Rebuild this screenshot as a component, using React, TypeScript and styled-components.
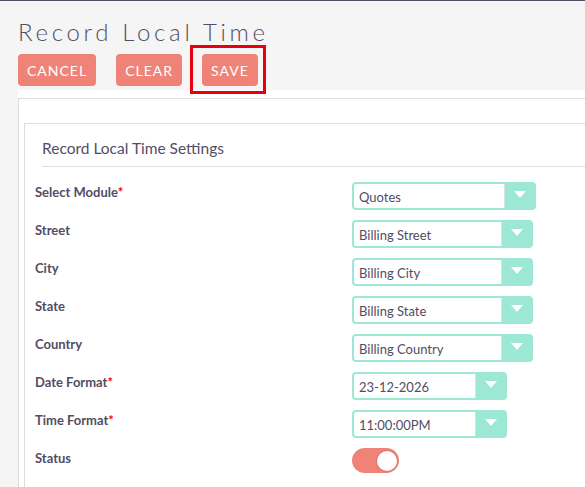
import React from 'react';
import styled, { createGlobalStyle } from 'styled-components';

const GlobalStyle = createGlobalStyle`
  html, body {
    margin: 0;
    padding: 0;
    overflow: hidden;
  }
  body {
    background: #f5f5f5;
    font-family: Lato, "Open Sans", Arial, sans-serif;
    color: #534d64;
  }
`;

const Page = styled.div`
  min-width: 680px;
  min-height: 487px;
  border-top: 1px solid #534d64;
  padding-left: 18px;
`;

const Title = styled.h2`
  margin: 16px 0 0;
  font-size: 24px;
  font-weight: 300;
  letter-spacing: 3.7px;
  line-height: normal;
  color: #534d64;
`;

const Toolbar = styled.div`
  display: flex;
  gap: 20px;
  margin-top: 8px;
`;

const ActionWrap = styled.div<{ $marked?: boolean }>`
  position: relative;

  ${({ $marked }) =>
    $marked &&
    `
    &::after {
      content: '';
      position: absolute;
      top: -9px;
      left: -12px;
      right: -8px;
      bottom: -8px;
      border: 3px solid #e8000b;
    }
  `}
`;

const ActionButton = styled.button`
  height: 32px;
  padding: 0 9px;
  border: none;
  border-radius: 4px;
  background: #f08377;
  color: #fff;
  font-family: Lato, Arial, sans-serif;
  font-size: 14px;
  letter-spacing: 1px;
  text-transform: uppercase;
  cursor: pointer;
`;

const Panel = styled.div`
  margin-top: 4px;
  background: #fff;
  padding-top: 8px;
  min-height: 400px;
`;

const OuterBox = styled.div`
  border-top: 1px solid #ddd;
  border-left: 1px solid #ddd;
  padding: 24px 0 0 5px;
`;

const Settings = styled.div`
  border-top: 1px solid #ddd;
  border-left: 1px solid #ddd;
  padding-bottom: 20px;
`;

const SettingsHeader = styled.h3`
  margin: 14px 0 0 17px;
  padding-bottom: 8px;
  border-bottom: 1px solid #ddd;
  font-size: 15.5px;
  font-weight: 400;
  line-height: 20px;
  color: #534d64;
`;

const Form = styled.div`
  margin-top: 11px;
  padding-left: 10px;
`;

const Row = styled.div`
  display: grid;
  grid-template-columns: 317px 1fr;
  height: 38px;
`;

const Label = styled.label`
  padding-top: 6px;
  font-size: 13px;
  font-weight: 700;
  line-height: 16px;
  color: #534d64;
`;

const Required = styled.span`
  color: #ff0000;
`;

const Field = styled.div`
  padding-top: 4px;
`;

const SelectBox = styled.div<{ $width: number }>`
  box-sizing: border-box;
  display: flex;
  width: ${({ $width }) => $width}px;
  height: 28px;
  border: 2px solid #9ce8d5;
  border-radius: 4px;
  background: #9ce8d5;
`;

const SelectValue = styled.div`
  flex: 1;
  display: flex;
  align-items: center;
  padding: 1px 0 0 5px;
  background: #fff;
  border-right: 1px solid #d6e4e0;
  border-radius: 2px 0 0 2px;
  font-size: 13px;
  color: #534d64;
`;

const SelectArrow = styled.div`
  width: 29px;
  display: flex;
  align-items: center;
  justify-content: center;
  padding-bottom: 3px;

  &::before {
    content: '';
    border-left: 6px solid transparent;
    border-right: 6px solid transparent;
    border-top: 7px solid #fff;
  }
`;

const Switch = styled.div<{ $on: boolean }>`
  box-sizing: border-box;
  width: 47px;
  height: 25px;
  border-radius: 13px;
  background: ${({ $on }) => ($on ? '#f08377' : '#ccc')};
  display: flex;
  align-items: center;
  justify-content: ${({ $on }) => ($on ? 'flex-end' : 'flex-start')};
  padding: 0 2px;
`;

const Knob = styled.div`
  width: 20px;
  height: 20px;
  border-radius: 50%;
  background: #fff;
  box-shadow: 0 0 0 1px rgba(0, 0, 0, 0.08);
`;

interface SelectRow {
  label: string;
  required?: boolean;
  value: string;
  width: number;
}

const rows: SelectRow[] = [
  { label: 'Select Module', required: true, value: 'Quotes', width: 184 },
  { label: 'Street', value: 'Billing Street', width: 181 },
  { label: 'City', value: 'Billing City', width: 181 },
  { label: 'State', value: 'Billing State', width: 181 },
  { label: 'Country', value: 'Billing Country', width: 181 },
  { label: 'Date Format', required: true, value: '23-12-2026', width: 155 },
  { label: 'Time Format', required: true, value: '11:00:00PM', width: 155 },
];

const App: React.FC = () => {
  return (
    <>
      <GlobalStyle />
      <Page>
        <Title>Record Local Time</Title>
        <Toolbar>
          <ActionWrap>
            <ActionButton>Cancel</ActionButton>
          </ActionWrap>
          <ActionWrap>
            <ActionButton>Clear</ActionButton>
          </ActionWrap>
          <ActionWrap $marked>
            <ActionButton>Save</ActionButton>
          </ActionWrap>
        </Toolbar>
        <Panel>
          <OuterBox>
            <Settings>
              <SettingsHeader>Record Local Time Settings</SettingsHeader>
              <Form>
                {rows.map((row) => (
                  <Row key={row.label}>
                    <Label>
                      {row.label}
                      {row.required && <Required>*</Required>}
                    </Label>
                    <Field>
                      <SelectBox $width={row.width}>
                        <SelectValue>{row.value}</SelectValue>
                        <SelectArrow />
                      </SelectBox>
                    </Field>
                  </Row>
                ))}
                <Row>
                  <Label>Status</Label>
                  <Field>
                    <Switch $on>
                      <Knob />
                    </Switch>
                  </Field>
                </Row>
              </Form>
            </Settings>
          </OuterBox>
        </Panel>
      </Page>
    </>
  );
};

export default App;
